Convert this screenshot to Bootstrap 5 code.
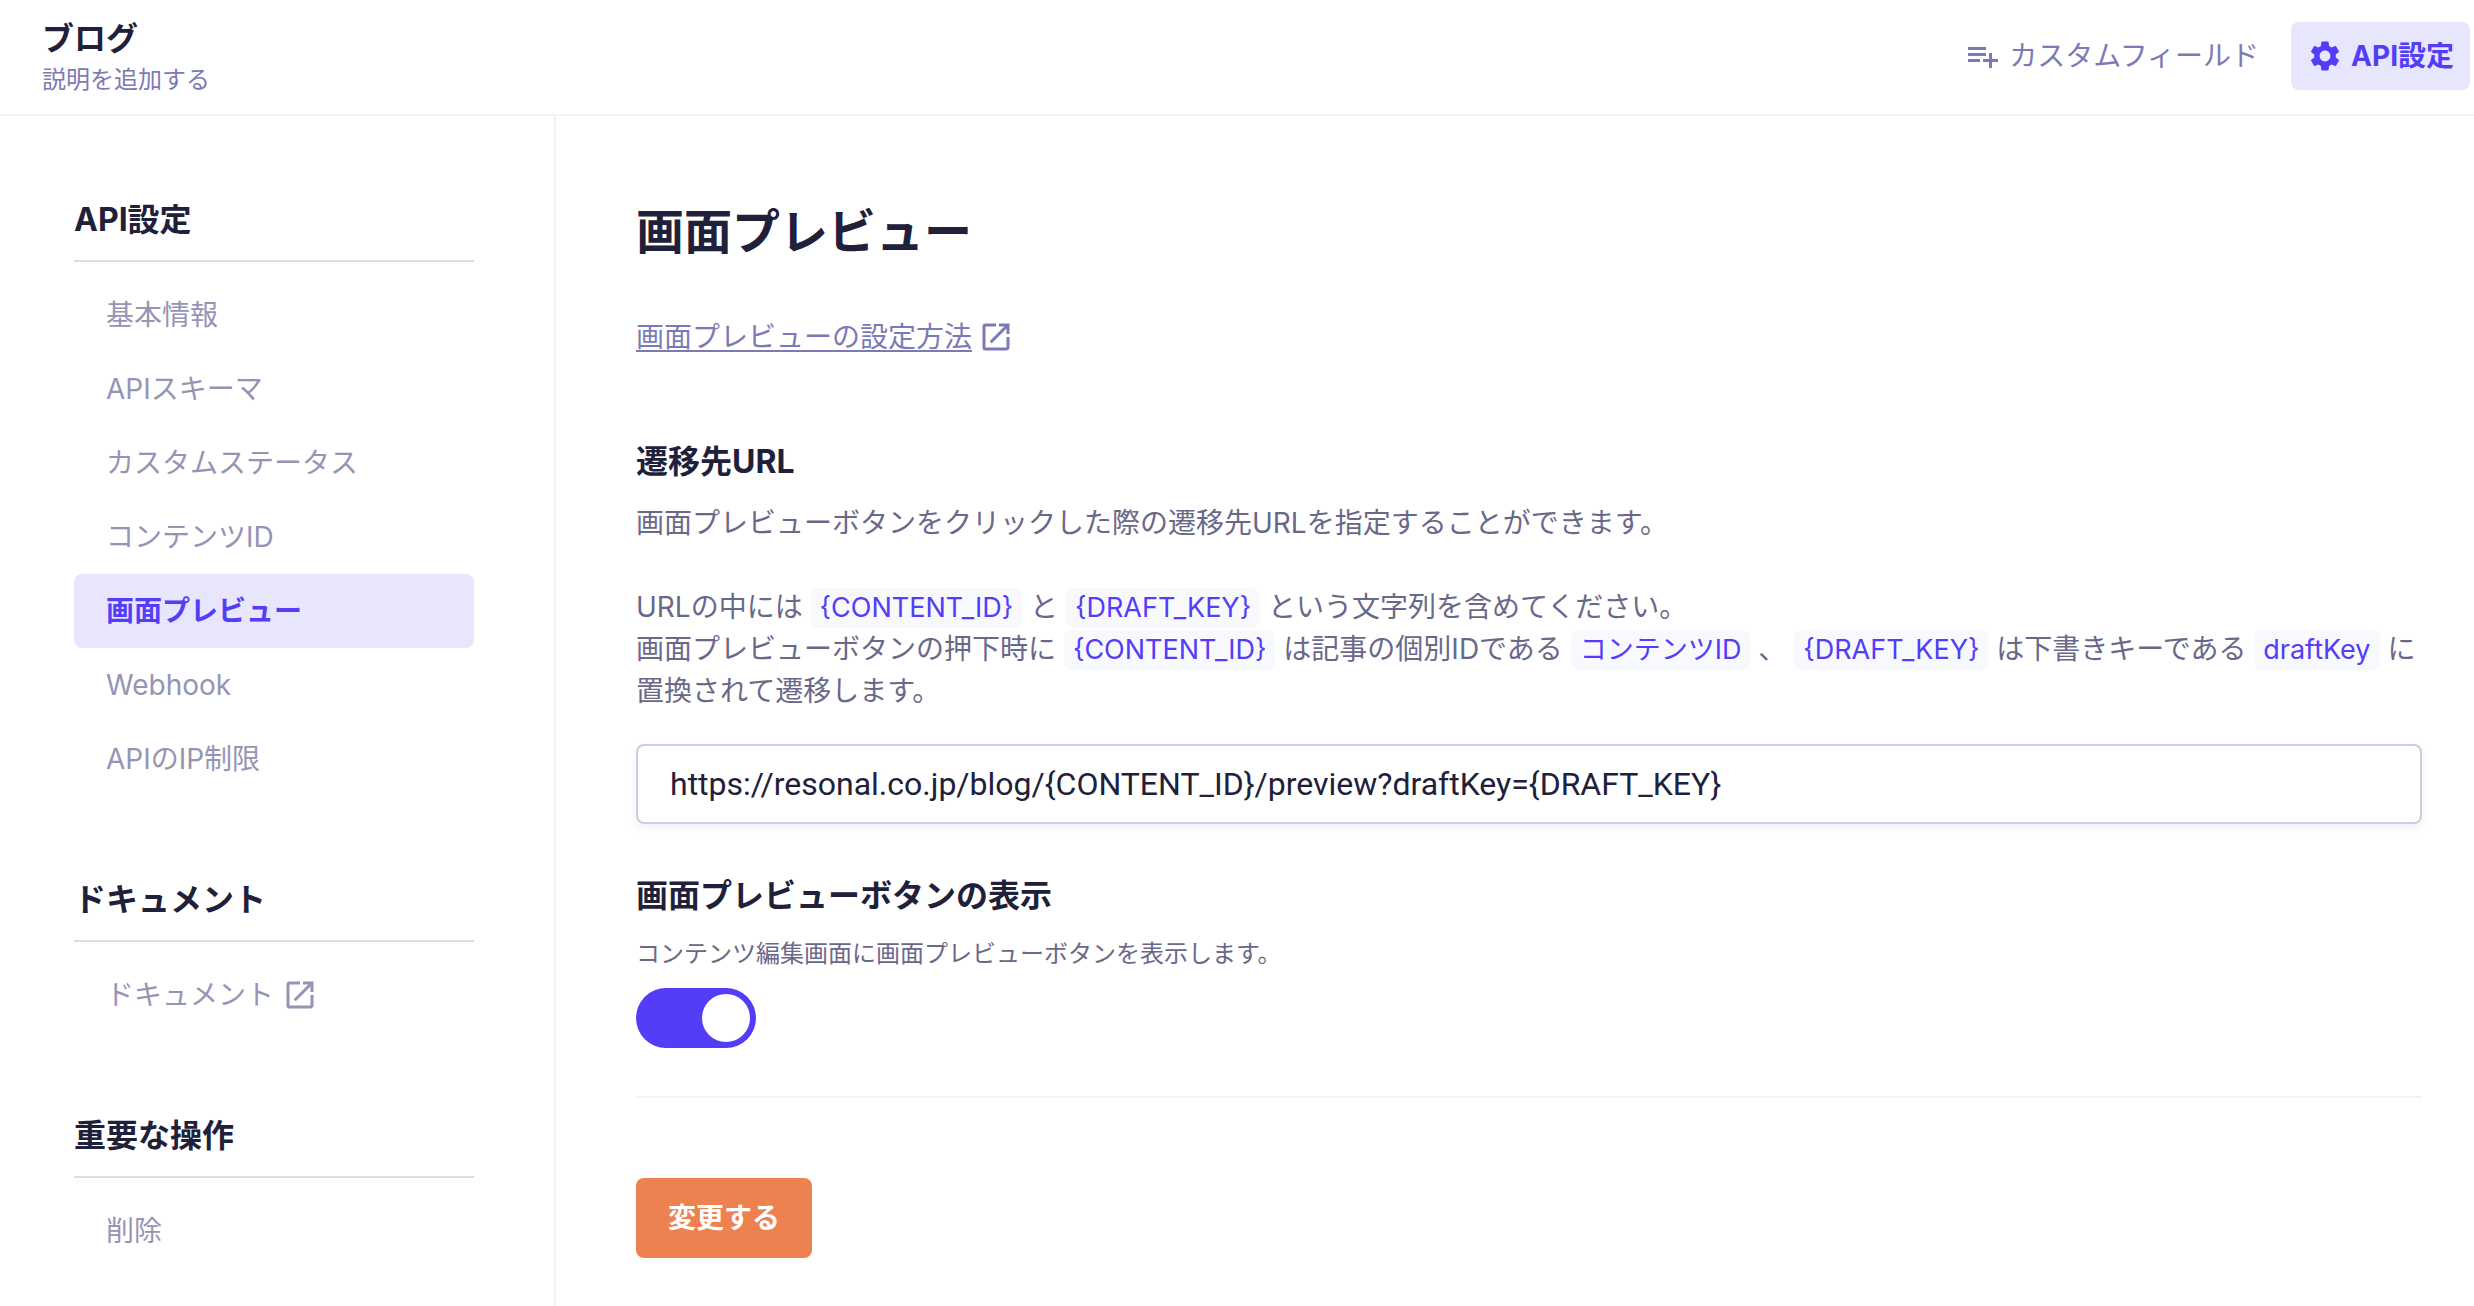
<!DOCTYPE html>
<html lang="ja">
<head>
<meta charset="utf-8">
<meta name="viewport" content="width=device-width, initial-scale=1">
<title>API設定 - 画面プレビュー</title>
<link href="https://cdn.jsdelivr.net/npm/bootstrap@5.3.0/dist/css/bootstrap.min.css" rel="stylesheet">
<style>
  :root {
    --ink: #21203a;
    --body: #6a6889;
    --muted: #9694b4;
    --link: #7c7ab5;
    --accent: #533df7;
    --accent-soft: #e8e6fc;
    --line: #f3f3fa;
  }
  body {
    font-family: Inter, "Noto Sans CJK JP", sans-serif;
    font-size: 28px;
    line-height: 42px;
    color: var(--body);
    background: #fff;
  }
  h1, h2, p { margin: 0; }
  .topbar { padding: 0 4px 0 42px; border-bottom: 2px solid var(--line); }
  .topbar-text { padding: 17px 0 15px; }
  .topbar-nav { gap: 16px; padding-top: 22px; }
  .topbar-title { font-size: 32px; line-height: 44px; font-weight: 700; color: var(--ink); }
  .topbar-sub { font-size: 24px; line-height: 38px; color: var(--link); }
  .tab-link {
    gap: 8px; padding: 0 16px; height: 68px; border-radius: 8px;
    color: var(--link); text-decoration: none;
  }
  .tab-link.active { background: var(--accent-soft); color: var(--accent); font-weight: 700; }
  .icon { width: 36px; height: 36px; fill: currentColor; flex: none; }
  .side { width: 556px; padding: 80px 80px 0 74px; border-right: 2px solid var(--line); }
  .section-title { font-size: 32px; line-height: 48px; font-weight: 700; color: var(--ink); }
  .side .section-title { padding-bottom: 16px; margin-bottom: 16px; border-bottom: 2px solid #ddd; }
  .side-group { margin-bottom: 80px; }
  .side-group:last-child { margin-bottom: 0; }
  .side-link {
    gap: 8px; padding: 16px 32px; border-radius: 8px;
    color: var(--muted); text-decoration: none;
  }
  .side-link.active { background: var(--accent-soft); color: var(--accent); font-weight: 700; }
  .content { padding: 80px 52px 40px 80px; }
  .page-title { font-size: 48px; line-height: 72px; font-weight: 700; color: var(--ink); }
  .help-link { gap: 6px; color: var(--link); text-decoration: none; }
  .help-link span { text-decoration: underline; text-decoration-thickness: 2px; text-underline-offset: 3px; }
  .url-label { margin-top: 80px; }
  .url-note { margin-top: 42px; }
  .token {
    display: inline-block; padding: 0 9px; border-radius: 8px; background: #f8f9fd;
    color: var(--accent); font-size: 27px; line-height: 40px;
  }
  .url-box {
    height: 80px; margin-top: 32px; padding: 0 32px; border: 2px solid #cfcce2; border-radius: 8px;
    font-family: Roboto, "Noto Sans CJK JP", sans-serif;
    font-size: 32px; color: var(--ink); box-shadow: 0 4px 8px rgba(33, 32, 58, .06);
  }
  .hint { font-size: 24px; line-height: 36px; }
  .form-switch.toggle { padding: 0; min-height: 60px; }
  .form-switch.toggle .form-check-input {
    float: none; display: block; width: 120px; height: 60px; margin: 0; border: 0; border-radius: 30px;
    background-image: url("data:image/svg+xml,%3csvg xmlns='http://www.w3.org/2000/svg' viewBox='-5 -5 10 10'%3e%3ccircle r='4' fill='%23fff'/%3e%3c/svg%3e");
    background-color: #cfcce2;
  }
  .form-switch.toggle .form-check-input:checked { background-color: var(--accent); }
  .divider { margin: 48px 0 80px; border: 0; border-top: 2px solid var(--line); opacity: 1; }
  .btn-save {
    height: 80px; padding: 0 32px; border: 0; border-radius: 8px;
    background: #ee8150; color: #fff; font-size: 28px; font-weight: 700;
  }
  .btn-save:hover { background: #df7240; color: #fff; }
</style>
<script src="https://cdn.jsdelivr.net/npm/bootstrap@5.3.0/dist/js/bootstrap.bundle.min.js"></script>
</head>
<body class="d-flex flex-column min-vh-100">
<svg class="d-none" xmlns="http://www.w3.org/2000/svg">
  <symbol id="i-open" viewBox="0 0 24 24"><path d="M19 19H5V5h7V3H5a2 2 0 0 0-2 2v14a2 2 0 0 0 2 2h14c1.100 0 2-.9 2-2v-7h-2v7zM14 3v2h3.590l-9.830 9.830 1.410 1.410L19 6.410V10h2V3h-7z"/></symbol>
</svg>

<header class="topbar d-flex align-items-start justify-content-between">
  <div class="topbar-text">
    <div class="topbar-title">ブログ</div>
    <div class="topbar-sub">説明を追加する</div>
  </div>
  <nav class="topbar-nav d-flex">
    <a href="#" class="tab-link d-flex align-items-center">
      <svg class="icon" viewBox="0 0 24 24" aria-hidden="true"><path d="M14 10H2v2h12v-2zm0-4H2v2h12V6zm4 8v-4h-2v4h-4v2h4v4h2v-4h4v-2h-4zM2 16h8v-2H2v2z"/></svg>
      カスタムフィールド
    </a>
    <a href="#" class="tab-link active d-flex align-items-center">
      <svg class="icon" viewBox="0 0 24 24" aria-hidden="true"><path d="M19.140 12.940c.040-.3.060-.610.060-.940 0-.320-.020-.640-.070-.940l2.030-1.580c.180-.140.230-.410.120-.610l-1.920-3.320c-.120-.220-.370-.290-.590-.220l-2.390.960c-.5-.380-1.030-.7-1.620-.940l-.360-2.540c-.040-.240-.240-.410-.480-.410h-3.840c-.240 0-.430.170-.470.410l-.360 2.540c-.590.240-1.130.570-1.620.940l-2.390-.960c-.220-.080-.470 0-.590.220L2.740 8.870c-.120.210-.080.470.120.610l2.030 1.580c-.050.3-.090.630-.090.940s.020.640.070.940l-2.030 1.580c-.180.140-.230.410-.120.610l1.920 3.320c.120.220.370.290.590.220l2.390-.960c.5.380 1.030.7 1.620.940l.360 2.540c.050.240.240.410.480.410h3.840c.240 0 .440-.170.470-.410l.360-2.540c.590-.240 1.130-.560 1.620-.940l2.390.960c.220.080.470 0 .590-.220l1.920-3.320c.120-.220.070-.470-.120-.610l-2.010-1.580zM12 15.600c-1.980 0-3.600-1.620-3.600-3.600s1.620-3.600 3.600-3.600 3.600 1.620 3.600 3.600-1.620 3.600-3.600 3.600z"/></svg>
      API設定
    </a>
  </nav>
</header>

<div class="d-flex flex-grow-1">
  <aside class="side flex-shrink-0">
    <section class="side-group">
      <h2 class="section-title">API設定</h2>
      <nav class="d-flex flex-column">
        <a href="#" class="side-link">基本情報</a>
        <a href="#" class="side-link">APIスキーマ</a>
        <a href="#" class="side-link">カスタムステータス</a>
        <a href="#" class="side-link">コンテンツID</a>
        <a href="#" class="side-link active" aria-current="page">画面プレビュー</a>
        <a href="#" class="side-link">Webhook</a>
        <a href="#" class="side-link">APIのIP制限</a>
      </nav>
    </section>
    <section class="side-group">
      <h2 class="section-title">ドキュメント</h2>
      <nav>
        <a href="#" class="side-link d-flex align-items-center">ドキュメント<svg class="icon" aria-hidden="true"><use href="#i-open"/></svg></a>
      </nav>
    </section>
    <section class="side-group">
      <h2 class="section-title">重要な操作</h2>
      <nav class="d-flex flex-column">
        <a href="#" class="side-link">削除</a>
      </nav>
    </section>
  </aside>

  <main class="content flex-grow-1">
    <h1 class="page-title">画面プレビュー</h1>
    <a href="#" class="help-link d-inline-flex align-items-center mt-5"><span>画面プレビューの設定方法</span><svg class="icon" aria-hidden="true"><use href="#i-open"/></svg></a>

    <form>
      <label for="preview-url" class="section-title url-label d-block">遷移先URL</label>
      <p class="mt-3">画面プレビューボタンをクリックした際の遷移先URLを指定することができます。</p>
      <p class="url-note">URLの中には <span class="token">{CONTENT_ID}</span> と <span class="token">{DRAFT_KEY}</span> という文字列を含めてください。<br>
      画面プレビューボタンの押下時に <span class="token">{CONTENT_ID}</span> は記事の個別IDである <span class="token">コンテンツID</span> 、 <span class="token">{DRAFT_KEY}</span> は下書きキーである <span class="token">draftKey</span> に置換されて遷移します。</p>
      <input type="text" id="preview-url" class="form-control url-box" value="https://resonal.co.jp/blog/{CONTENT_ID}/preview?draftKey={DRAFT_KEY}">

      <label for="preview-toggle" class="section-title d-block mt-5">画面プレビューボタンの表示</label>
      <p class="hint mt-3">コンテンツ編集画面に画面プレビューボタンを表示します。</p>
      <div class="form-check form-switch toggle mt-3">
        <input class="form-check-input" type="checkbox" role="switch" id="preview-toggle" checked>
      </div>
      <hr class="divider">
      <button type="button" class="btn btn-save">変更する</button>
    </form>
  </main>
</div>
</body>
</html>
